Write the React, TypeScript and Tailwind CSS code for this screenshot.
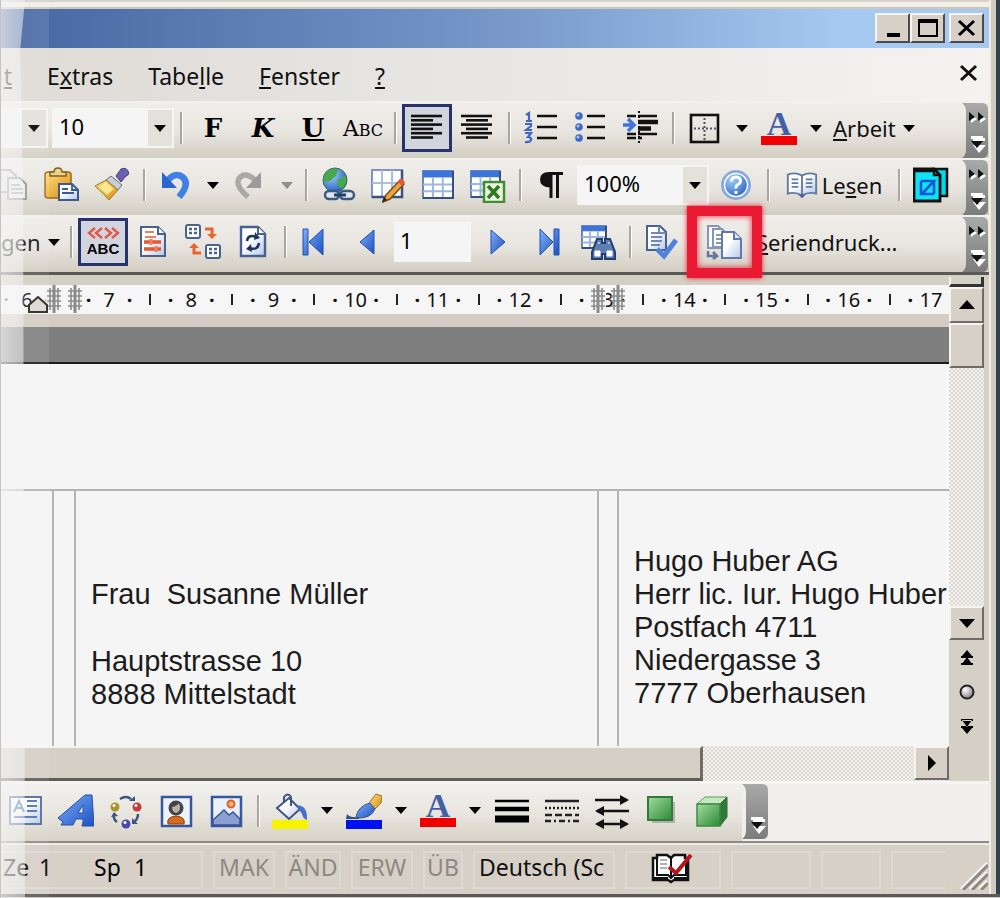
import React from "react";

type Kids = { children?: React.ReactNode };

const TOOLBAR = "flex h-[57px] border-t-2 border-[#f3f1ee] bg-linear-to-b from-[#f0eeea] via-[#e9e6e1] to-[#d2cec2] pr-px";
const RAISED =
  "bg-[#d6d0c7] border-2 border-t-[#f6f4f0] border-l-[#f6f4f0] border-r-[#6f6c68] border-b-[#6f6c68] flex items-center justify-center";
const DITHER =
  "bg-[#f3f2ef] bg-[repeating-conic-gradient(#dcd8d2_0%_25%,#f3f2ef_0%_50%)] bg-[length:4px_4px]";

function Icon({ children, size = 36 }: Kids & { size?: number }) {
  return (
    <svg width={size} height={size} viewBox="0 0 36 36" fill="none" aria-hidden="true" className="shrink-0">
      {children}
    </svg>
  );
}

function Btn({ label, active, children }: Kids & { label: string; active?: boolean }) {
  return (
    <button
      type="button"
      aria-label={label}
      aria-pressed={active}
      className={
        "flex h-[48px] w-[50px] shrink-0 items-center justify-center text-black " +
        (active ? "border-[3px] border-[#27336b] bg-[#d2d5dd]" : "")
      }
    >
      {children}
    </button>
  );
}

function Sep() {
  return (
    <div className="flex w-[14px] shrink-0 justify-center">
      <div className="h-[32px] w-[3px] border-l-2 border-r border-l-[#aaa69d] border-r-white" />
    </div>
  );
}

function Tri({ color = "#000" }: { color?: string }) {
  return (
    <svg width="12" height="7" viewBox="0 0 12 7" aria-hidden="true">
      <path d="M0 0h12L6 7z" fill={color} />
    </svg>
  );
}

function Drop({ label, color }: { label: string; color?: string }) {
  return (
    <button type="button" aria-label={label} className="flex h-[48px] w-[24px] shrink-0 items-center justify-center">
      <Tri color={color} />
    </button>
  );
}

function Combo({ label, value, className }: { label: string; value: string; className: string }) {
  return (
    <div className={"relative h-[40px] shrink-0 border-2 border-[#f6f5f3] bg-[#f5f5f5] " + className}>
      <select
        aria-label={label}
        defaultValue={value}
        className="h-[32px] w-full appearance-none bg-transparent pl-[5px] text-[22px] leading-[32px] text-black"
      >
        <option>{value}</option>
      </select>
      <span className="pointer-events-none absolute top-0 right-0 flex h-full w-[24px] items-center justify-center bg-[#e4e1db]">
        <Tri />
      </span>
    </div>
  );
}

function Overflow({ double = true }: { double?: boolean }) {
  return (
    <button type="button" aria-label="Weitere Schaltflächen" className="h-[55px] w-[26px] shrink-0">
      <svg width="26" height="55" viewBox="0 0 26 55" aria-hidden="true">
        <path d="M0 0H20Q26 0 26 6V49Q26 55 20 55H0Q4 52 4 47V8Q4 3 0 0z" fill="url(#chev)" />
        {double && (
          <g>
            <path d="M9 11l6 5-6 4zM18 11l6 5-6 4z" fill="#fff" />
            <path d="M7 9l6 5-6 4zM16 9l6 5-6 4z" fill="#111" />
          </g>
        )}
        <path d="M11 35h12v3H11zM11 42h13l-7 8z" fill="#fff" />
        <path d="M9 33h12v3H9z" fill="#fff" />
        <path d="M9 38h12l-6 7z" fill="#111" />
      </svg>
    </button>
  );
}

function Defs() {
  return (
    <svg width="0" height="0" className="absolute" aria-hidden="true">
      <defs>
        <linearGradient id="chev" x1="0" y1="0" x2="0" y2="1">
          <stop offset="0" stopColor="#a9a9a9" />
          <stop offset="1" stopColor="#7c7c7c" />
        </linearGradient>
        <linearGradient id="blue" x1="0" y1="0" x2="1" y2="1">
          <stop offset="0" stopColor="#7fb0f5" />
          <stop offset="1" stopColor="#1b4fc4" />
        </linearGradient>
        <linearGradient id="paper" x1="0" y1="0" x2="1" y2="1">
          <stop offset="0.4" stopColor="#fff" />
          <stop offset="1" stopColor="#b4c8ea" />
        </linearGradient>
        <linearGradient id="gold" x1="0" y1="0" x2="1" y2="1">
          <stop offset="0" stopColor="#ffdf80" />
          <stop offset="1" stopColor="#d98a10" />
        </linearGradient>
        <linearGradient id="green" x1="0" y1="0" x2="1" y2="1">
          <stop offset="0" stopColor="#a4dca0" />
          <stop offset="1" stopColor="#2b8a35" />
        </linearGradient>
        <radialGradient id="globe" cx="0.35" cy="0.3" r="0.8">
          <stop offset="0" stopColor="#9fd0ff" />
          <stop offset="1" stopColor="#1c55b8" />
        </radialGradient>
        <radialGradient id="ball" cx="0.35" cy="0.3" r="0.7">
          <stop offset="0" stopColor="#fff" />
          <stop offset="1" stopColor="#8a8a8a" />
        </radialGradient>
      </defs>
    </svg>
  );
}

function AlignIcon({ center }: { center?: boolean }) {
  const short = center ? 7 : 2;
  return (
    <Icon>
      {[6, 14.6, 23.2].map((y) => (
        <path key={y} d={`M2 ${y}h31`} stroke="#111" strokeWidth="2.6" />
      ))}
      {[10.3, 18.9, 27.5].map((y) => (
        <path key={y} d={`M${short} ${y}h22`} stroke="#111" strokeWidth="2.6" />
      ))}
    </Icon>
  );
}

function LetterColor({ color }: { color: string }) {
  return (
    <span className="flex flex-col items-center">
      <span className="font-['Liberation_Serif',serif] text-[34px] leading-[24px] font-bold text-[#4460a4]">A</span>
      <svg width="36" height="9" aria-hidden="true">
        <rect width="36" height="9" fill={color} />
      </svg>
    </span>
  );
}

function Grid({ x, y, w, h }: { x: number; y: number; w: number; h: number }) {
  return (
    <g>
      <rect x={x} y={y} width={w} height={h} fill="#fff" stroke="#4a6aa5" strokeWidth="1.6" />
      <rect x={x} y={y} width={w} height={h * 0.24} fill="#3b74dc" />
      <path
        d={`M${x} ${y + h * 0.5}h${w}M${x} ${y + h * 0.75}h${w}M${x + w * 0.33} ${y + h * 0.24}V${y + h}M${x + w * 0.66} ${y + h * 0.24}V${y + h}`}
        stroke="#9db6e2"
        strokeWidth="2"
      />
      <path d={`M${x} ${y + h}H${x + w}V${y}`} stroke="#34507f" strokeWidth="2" />
    </g>
  );
}

function Hatch({ className }: { className: string }) {
  return (
    <svg width="16" height="28" viewBox="0 0 16 28" aria-hidden="true" className={"absolute top-0 " + className}>
      <path d="M8 0v28" stroke="#8a8a8a" strokeWidth="3" />
      <path d="M4 3v22M12 3v22M1 6h14M1 11h14M1 16h14M1 21h14" stroke="#8a8a8a" strokeWidth="1.6" />
    </svg>
  );
}

function StatusCell({ children, className }: Kids & { className: string }) {
  return (
    <div
      className={
        "flex h-[38px] shrink-0 items-center overflow-hidden border-2 border-[#dedad3] pb-1 text-[23px] whitespace-pre " +
        className
      }
    >
      {children}
    </div>
  );
}

function TitleButton({ label, children, className = "" }: Kids & { label: string; className?: string }) {
  return (
    <button
      type="button"
      aria-label={label}
      className={
        "flex h-[30px] w-[35px] items-center justify-center border-2 border-t-[#f6f4f0] border-r-[#4d4a48] border-b-[#4d4a48] border-l-[#f6f4f0] bg-[#d6d0c7] " +
        className
      }
    >
      {children}
    </button>
  );
}

const RULER = [7, 8, 9, 10, 11, 12, 13, 14, 15, 16, 17];

export default function App() {
  return (
    <div className="relative flex min-h-screen w-full flex-col overflow-hidden border-l border-[#c4c4c4] bg-[#d6d0c7] font-['Noto_Sans',sans-serif] text-[23px] text-[#111]">
      <Defs />
      <div className="flex flex-1">
        <div className="flex min-w-0 flex-1 flex-col">
          <div className="h-[9px] border-t-2 border-b-2 border-t-[#d6d3cc] border-b-[#ccc8bb] bg-[#f2efe7]" />

          <header className="flex h-[39px] items-start justify-end bg-linear-to-r from-[#4566a2] via-[#7697c8] via-50% to-[#a6c9f2] to-85% pt-1 pr-[5px]">
            <TitleButton label="Minimieren">
              <svg width="24" height="22" aria-hidden="true">
                <path d="M6 18h13" stroke="#000" strokeWidth="4" />
              </svg>
            </TitleButton>
            <TitleButton label="Maximieren">
              <svg width="24" height="22" aria-hidden="true">
                <path d="M3 3h18v16H3z" fill="none" stroke="#000" strokeWidth="2" />
                <path d="M2 4h20" stroke="#000" strokeWidth="4" />
              </svg>
            </TitleButton>
            <TitleButton label="Schliessen" className="ml-1">
              <svg width="20" height="18" aria-hidden="true">
                <path d="M2 2l15 14M17 2L2 16" stroke="#000" strokeWidth="3" />
              </svg>
            </TitleButton>
          </header>

          <nav className="flex h-[53px] items-center bg-linear-to-r from-[#dfdcd8] via-[#e9e7e3] to-[#f4f3f2]">
            <div className="flex flex-1 gap-[35px] pt-[3px]">
              <button type="button" className="flex w-[11px] justify-end">
                <u>t</u>
              </button>
              <button type="button">
                E<u>x</u>tras
              </button>
              <button type="button">
                Tabe<u>l</u>le
              </button>
              <button type="button">
                <u>F</u>enster
              </button>
              <button type="button">
                <u>?</u>
              </button>
            </div>
            <button type="button" aria-label="Dokument schliessen" className="mr-[10px] pb-[4px]">
              <svg width="20" height="18" aria-hidden="true">
                <path d="M2 2l15 14M17 2L2 16" stroke="#111" strokeWidth="3" />
              </svg>
            </button>
          </nav>

          <div role="toolbar" aria-label="Format" className={TOOLBAR}>
            <div className="flex flex-1 items-center overflow-hidden pb-[5px] text-[22px]">
              <Combo label="Schriftart" value="" className="w-[47px]" />
              <Combo label="Schriftgrad" value="10" className="ml-[4px] w-[122px]" />
              <Sep />
              <Btn label="Fett">
                <span className="font-['DejaVu_Serif',serif] text-[26px] font-bold">F</span>
              </Btn>
              <Btn label="Kursiv">
                <span className="font-['DejaVu_Serif',serif] text-[26px] font-bold italic">K</span>
              </Btn>
              <Btn label="Unterstrichen">
                <u className="font-['DejaVu_Serif',serif] text-[26px] font-bold">U</u>
              </Btn>
              <Btn label="Kapitälchen">
                <span className="font-['DejaVu_Serif',serif] text-[22px]">
                  A<span className="text-[16px]">BC</span>
                </span>
              </Btn>
              <Sep />
              <Btn label="Linksbündig" active>
                <AlignIcon />
              </Btn>
              <Btn label="Zentriert">
                <AlignIcon center />
              </Btn>
              <Sep />
              <Btn label="Nummerierung">
                <Icon>
                  <path d="M14 6h20M14 17h20M14 28h20" stroke="#111" strokeWidth="2.4" />
                  <path
                    d="M3 5l3-2v8M3 11h6M2 14h6v2l-5 4h6M2 23h6l-3 4c5 0 4 6-3 5"
                    stroke="#3f68c4"
                    strokeWidth="2.2"
                  />
                </Icon>
              </Btn>
              <Btn label="Aufzählung">
                <Icon>
                  <path d="M14 6h18M14 17h18M14 28h18" stroke="#111" strokeWidth="2.4" />
                  <g fill="#3f68c4">
                    <circle cx="6" cy="6" r="3.8" />
                    <circle cx="6" cy="17" r="3.8" />
                    <circle cx="6" cy="28" r="3.8" />
                  </g>
                  <g fill="#a9c4f0">
                    <circle cx="5" cy="5" r="1.5" />
                    <circle cx="5" cy="16" r="1.5" />
                    <circle cx="5" cy="27" r="1.5" />
                  </g>
                </Icon>
              </Btn>
              <Btn label="Einzug vergrössern">
                <Icon>
                  <path d="M4 6h9M15 6h19M4 28h9M15 24h19M4 24h9M15 28h4" stroke="#111" strokeWidth="2.4" />
                  <path d="M15 12h20M15 18.500h13" stroke="#111" strokeWidth="4.400" />
                  <path d="M16 1v34" stroke="#111" strokeWidth="2" strokeDasharray="2 3" />
                  <path d="M0 15h10M5 9l6 6-6 6" stroke="#3f74dc" strokeWidth="3.500" />
                </Icon>
              </Btn>
              <Sep />
              <Btn label="Rahmen">
                <Icon>
                  <rect x="4" y="5" width="27" height="27" stroke="#111" strokeWidth="2.6" />
                  <path d="M17.500 8v22M7 18.500h22" stroke="#555" strokeWidth="2" strokeDasharray="2 2" />
                </Icon>
              </Btn>
              <Drop label="Rahmenarten" />
              <Btn label="Schriftfarbe">
                <LetterColor color="#f00000" />
              </Btn>
              <Drop label="Schriftfarben" />
              <button type="button" className="ml-[5px] flex items-center gap-[7px]">
                <span>
                  <u>A</u>rbeit
                </span>
                <Tri />
              </button>
            </div>
            <Overflow />
          </div>

          <div role="toolbar" aria-label="Standard" className={TOOLBAR}>
            <div className="flex flex-1 items-center overflow-hidden pb-[5px] text-[22px]">
              <div className="flex w-[36px] shrink-0 justify-end overflow-hidden">
                <Btn label="Kopieren">
                  <Icon>
                    <path d="M4 3h12l6 6v16H4z" fill="#e8e8e8" stroke="#999" strokeWidth="2" />
                    <path d="M14 11h12l6 6v15H14z" fill="#eee" stroke="#999" strokeWidth="2" />
                    <path d="M17 18h9M17 22h12M17 26h12" stroke="#aaa" strokeWidth="2" />
                  </Icon>
                </Btn>
              </div>
              <Btn label="Einfügen">
                <Icon>
                  <rect x="1" y="5" width="26" height="26" rx="3" fill="url(#gold)" stroke="#9a6714" strokeWidth="1.500" />
                  <path d="M6 9V5h4q0-4 4-4t4 4h4v4z" fill="#e9d28a" stroke="#806020" strokeWidth="1.500" />
                  <path d="M15 17h13l6 6v10H15z" fill="url(#paper)" stroke="#3c5a90" strokeWidth="2" />
                  <path d="M28 17v6h6M18 22h6M18 26h12M15 33h20" stroke="#3c5a90" strokeWidth="1.800" />
                </Icon>
              </Btn>
              <Btn label="Format übertragen">
                <Icon>
                  <path d="M22 9l5-7q5-2 7 2t-2 5l-5 6z" fill="#6a60b0" stroke="#453c85" />
                  <path d="M17 9l11 9-4 5-12-10z" fill="#c7ced9" stroke="#666f80" />
                  <path d="M12 13l12 10-9 10Q10 27 1 19z" fill="url(#gold)" stroke="#9a8020" />
                  <path d="M12 15l8 7-7 6-8-8z" fill="#fdf3a0" opacity=".8" />
                </Icon>
              </Btn>
              <Sep />
              <Btn label="Rückgängig">
                <Icon>
                  <path d="M9 14q9-10 16-3.500t-4 19.500" stroke="#3f80e6" strokeWidth="6.500" />
                  <path d="M4 5v16h15z" fill="#2b66d4" />
                </Icon>
              </Btn>
              <Drop label="Rückgängig-Liste" />
              <Btn label="Wiederherstellen">
                <Icon>
                  <path d="M23 13q-10-9-15.500-2t8.500 19" stroke="#aaa9a6" strokeWidth="5.500" />
                  <path d="M29 5v16H14z" fill="#9c9b99" />
                </Icon>
              </Btn>
              <Drop label="Wiederherstellen-Liste" color="#8f8e8b" />
              <Sep />
              <Btn label="Hyperlink">
                <Icon>
                  <circle cx="15" cy="13" r="12" fill="url(#globe)" stroke="#2f6a50" />
                  <path d="M6 6q5-6 12-4l-2 7-6 5-5 1-2-4zM18 12l8-3q2 7-4 13l-5-4z" fill="#48a850" />
                  <rect x="5" y="24" width="14" height="8" rx="4" fill="#dfe6f2" stroke="#3c5a80" strokeWidth="2.500" />
                  <rect x="20" y="24" width="14" height="8" rx="4" fill="#dfe6f2" stroke="#3c5a80" strokeWidth="2.500" />
                  <path d="M14 28h12" stroke="#23406a" strokeWidth="3" />
                </Icon>
              </Btn>
              <Btn label="Tabellen und Rahmen">
                <Icon>
                  <rect x="2" y="3" width="30" height="27" fill="#fff" stroke="#7b94c2" strokeWidth="2" />
                  <path d="M12 3v27M22 3v27M2 16h30" stroke="#a9bde0" strokeWidth="2" />
                  <path d="M2 30h30V3" stroke="#38527f" strokeWidth="2.500" />
                  <path d="M16 28L30 13l4 4-14 15-7 3z" fill="#eda43a" stroke="#774c20" strokeWidth="1.500" />
                  <path d="M28 15l3-4 4 4-3 4z" fill="#e4563a" />
                  <path d="M12 35l2-5 3 3z" fill="#222" />
                </Icon>
              </Btn>
              <Btn label="Tabelle einfügen">
                <Icon>
                  <Grid x={3} y={4} w={30} h={27} />
                </Icon>
              </Btn>
              <Btn label="Excel-Tabelle einfügen">
                <Icon>
                  <Grid x={1} y={4} w={29} h={26} />
                  <rect x="14" y="15" width="20" height="20" fill="#eef6e8" stroke="#3f8f2c" strokeWidth="2.500" />
                  <path d="M18 19l11 12M29 19L18 31" stroke="#2f7a20" strokeWidth="3.500" />
                </Icon>
              </Btn>
              <Sep />
              <Btn label="Formatierungszeichen">
                <Icon>
                  <path d="M29 5H15Q6 5 6 12.500t9.500 8V31h3V8h3.500v23h3V8h4z" fill="#111" />
                </Icon>
              </Btn>
              <Combo label="Zoom" value="100%" className="mr-[2px] w-[132px]" />
              <Btn label="Hilfe">
                <Icon>
                  <circle cx="18" cy="18" r="13.500" fill="url(#globe)" stroke="#86a9e2" strokeWidth="3" />
                  <circle cx="18" cy="18" r="11.500" stroke="#fff" strokeWidth="1.500" />
                  <path d="M13.500 14.500q0-4.500 4.500-4.500t4.500 4q0 2-2.500 3.500t-2 4M18 24v3" stroke="#fff" strokeWidth="3" />
                </Icon>
              </Btn>
              <Sep />
              <button type="button" className="flex w-[117px] shrink-0 items-center justify-center gap-[3px]">
                <Icon size={34}>
                  <path d="M3 7q8-3 15 1 7-4 15-1v20q-8-2-15 2-7-4-15-2z" fill="url(#paper)" stroke="#6479a5" strokeWidth="2" />
                  <path d="M18 8v21M7 12h7M7 16h7M7 20h7M22 12h7M22 16h7M22 20h7" stroke="#6479a5" strokeWidth="2" />
                  <path d="M14 28h8l-4 4z" fill="#4a5f90" />
                </Icon>
                <span>
                  Le<u>s</u>en
                </span>
              </button>
              <Sep />
              <Btn label="Adressen">
                <Icon>
                  <path d="M20 2h14v27H22z" fill="#00d8ee" stroke="#111" strokeWidth="2.500" />
                  <path d="M1 2h20l6 6v26H1z" fill="#10e4f4" stroke="#111" strokeWidth="2.800" />
                  <path d="M1 4h20M21 2v6h6" stroke="#111" strokeWidth="2.500" />
                  <path d="M8 14h13L9 27h12M8 14v13M21 14v13" stroke="#1557d8" strokeWidth="2.600" />
                </Icon>
              </Btn>
            </div>
            <Overflow />
          </div>

          <div role="toolbar" aria-label="Seriendruck" className={TOOLBAR}>
            <div className="flex flex-1 items-center pb-[5px] text-[22px]">
              <button type="button" className="flex w-[63px] shrink-0 items-center gap-[7px]">
                gen
                <Tri />
              </button>
              <Sep />
              <Btn label="Seriendruck-Vorschau" active>
                <span className="flex flex-col items-center">
                  <svg width="34" height="14" viewBox="0 0 34 14" fill="none" aria-hidden="true">
                    <path d="M9 2L3 7l6 5M16 2l-6 5 6 5M19 2l6 5-6 5M26 2l6 5-6 5" stroke="#e0584e" strokeWidth="2.400" />
                  </svg>
                  <span className="font-['Liberation_Sans',sans-serif] text-[15px] leading-[18px] font-bold">ABC</span>
                </span>
              </Btn>
              <Btn label="Seriendruckfelder hervorheben">
                <Icon>
                  <path d="M6 3h17l7 7v22H6z" fill="url(#paper)" stroke="#48618f" strokeWidth="2" />
                  <path d="M23 3v7h7" fill="#fff" stroke="#48618f" strokeWidth="2" />
                  <path d="M10 8h9M10 13h11" stroke="#f08060" strokeWidth="2" />
                  <path d="M9 18h17M9 25h17" stroke="#e8562e" strokeWidth="3.500" />
                  <path d="M16 15v6M21 22v6" stroke="#f08060" strokeWidth="3" />
                </Icon>
              </Btn>
              <Btn label="Felder übereinstimmen">
                <Icon>
                  <rect x="1" y="1" width="14" height="13" rx="2" fill="#fff" stroke="#48618f" strokeWidth="2" />
                  <rect x="21" y="21" width="14" height="13" rx="2" fill="#fff" stroke="#48618f" strokeWidth="2" />
                  <path
                    d="M4 5h3M9 5h3M4 9h3M9 9h3M24 25h3M29 25h3M24 29h3M29 29h3"
                    stroke="#48618f"
                    strokeWidth="2.500"
                  />
                  <path d="M20 5h7v7M16 29H9v-6" stroke="#e8662e" strokeWidth="3" />
                  <path d="M22 10h10l-5 5zM4 24l5-5 5 5z" fill="#e8662e" />
                </Icon>
              </Btn>
              <Btn label="Etiketten übertragen">
                <Icon>
                  <path d="M6 3h17l7 7v22H6z" fill="url(#paper)" stroke="#48618f" strokeWidth="2.400" />
                  <path d="M23 3v7h7" fill="#fff" stroke="#48618f" strokeWidth="2" />
                  <path d="M12 17q1-7 9-4M24 19q-1 8-10 5" stroke="#1f3460" strokeWidth="2.500" />
                  <path d="M20 8l5 6-6 2zM16 20l-5 5 6 3z" fill="#1f3460" />
                </Icon>
              </Btn>
              <Sep />
              <Btn label="Erster Datensatz">
                <Icon>
                  <path d="M4 5h5v26H4zM24 5v26L10 18z" fill="url(#blue)" stroke="#1e50b4" />
                </Icon>
              </Btn>
              <Btn label="Vorheriger Datensatz">
                <Icon>
                  <path d="M25 6v24L11 18z" fill="url(#blue)" stroke="#1e50b4" />
                </Icon>
              </Btn>
              <input
                aria-label="Datensatz"
                defaultValue="1"
                className="mx-[2px] h-[40px] w-[77px] shrink-0 bg-[#f5f5f5] pb-1 pl-[6px] text-[22px] text-black"
              />
              <Btn label="Nächster Datensatz">
                <Icon>
                  <path d="M11 6v24l14-12z" fill="url(#blue)" stroke="#1e50b4" />
                </Icon>
              </Btn>
              <Btn label="Letzter Datensatz">
                <Icon>
                  <path d="M10 5v26l13-13zM24 5h5v26h-5z" fill="url(#blue)" stroke="#1e50b4" />
                </Icon>
              </Btn>
              <Btn label="Eintrag suchen">
                <Icon>
                  <Grid x={2} y={2} w={24} h={22} />
                  <path
                    d="M17 15h5v4h3v-4h5l5 13v7H25v-5h-3v5H12v-7z"
                    fill="#5f7fb4"
                    stroke="#22406f"
                    strokeWidth="2"
                  />
                  <path d="M15 27h5v5h-5zM27 27h5v5h-5zM18 19h2M28 19h2" fill="#fff" stroke="#fff" />
                </Icon>
              </Btn>
              <Sep />
              <Btn label="Auf Fehler prüfen">
                <Icon>
                  <path d="M3 2h13l6 6v18H3z" fill="url(#paper)" stroke="#48618f" strokeWidth="2" />
                  <path d="M7 9h8M7 13h11M7 17h11M7 21h9M15 2v7h7" stroke="#7188b4" strokeWidth="2" />
                  <path d="M13 25l7 7 12-16" stroke="#4f82da" strokeWidth="5" />
                </Icon>
              </Btn>
              <div className="relative flex w-[69px] shrink-0 justify-center pl-1">
                <Btn label="Seriendruck in neues Dokument">
                  <Icon>
                    <path d="M2 2h10l4 4v18H2z" fill="#fff" stroke="#8595b8" strokeWidth="2" />
                    <path d="M7 5h9l4 4v14H7zM10 11h8M10 15h8M10 19h8" fill="#fff" stroke="#8595b8" strokeWidth="2" />
                    <path d="M16 8h12l7 7v19H16z" fill="url(#paper)" stroke="#6179ad" strokeWidth="2" />
                    <path d="M28 8v7h7" fill="#dfe8fa" stroke="#6179ad" strokeWidth="2" />
                    <path d="M2 27v5h8M7 28l4 4-4 3" stroke="#63779c" strokeWidth="2.500" />
                  </Icon>
                </Btn>
                <div className="pointer-events-none absolute -top-[12px] left-0 z-10 h-[72px] w-[75px] border-[10px] border-[#ea1a32] shadow-[0_0_5px_#ea1a32,inset_0_0_6px_#ea1a32]" />
              </div>
              <button type="button" className="whitespace-nowrap">
                <u>S</u>eriendruck...
              </button>
            </div>
            <Overflow />
          </div>

          <div className="flex flex-1 border-t-[3px] border-[#5a5854] pr-[5px]">
            <div className="flex min-w-0 flex-1 flex-col">
              <div className="border-t-[10px] border-b-[13px] border-t-[#d3cfc3] border-b-[#d4ccc4]">
                <div className="relative h-[29px] overflow-hidden bg-[#f6f6f6] text-[20px] leading-[29px]">
                  <div className="mr-[8px] -ml-[5px] flex">
                    {["·", "6"].map((t) => (
                      <span key={t} className="flex w-0 flex-1 justify-center">
                        {t}
                      </span>
                    ))}
                    {RULER.map((n) => (
                      <React.Fragment key={n}>
                        <span className="w-0 flex-1 text-center font-bold">·</span>
                        <span className="flex w-0 flex-1 items-center justify-center">
                          <i className="h-[11px] w-[2px] bg-[#222]" />
                        </span>
                        <span className="w-0 flex-1 text-center font-bold">·</span>
                        <span className="flex w-0 flex-1 justify-center">{n}</span>
                      </React.Fragment>
                    ))}
                  </div>
                  <Hatch className="left-[45px] bg-[#f6f6f6]" />
                  <Hatch className="left-[66px] bg-[#f6f6f6]" />
                  <Hatch className="left-[589px] bg-[#f6f6f6]" />
                  <Hatch className="left-[609px]" />
                  <svg width="20" height="18" viewBox="0 0 20 18" className="absolute bottom-0 left-[27px]" aria-hidden="true">
                    <path d="M1 16V9l9-8 9 8v7z" fill="#ddd9d2" stroke="#222" strokeWidth="2" />
                  </svg>
                </div>
              </div>
              <div className="h-[37px] border-b-2 border-[#1c1c1c] bg-[#7f7f7f]" />

              <main className="flex-1 bg-[#f5f5f5] pt-[125px] font-['Liberation_Sans',sans-serif] text-[29px] leading-[33px] text-[#1c1c1c]">
                <div className="flex h-full min-h-[257px] border-t-2 border-[#b4b4b4] whitespace-pre">
                  <div className="w-[53px] shrink-0 border-r-2 border-[#b4b4b4]" />
                  <div className="w-[22px] shrink-0 border-r-2 border-[#b4b4b4]" />
                  <address className="w-[523px] shrink-0 border-r-2 border-[#b4b4b4] pt-[87px] pl-[15px] not-italic">
                    <p>Frau  Susanne Müller</p>
                    <p className="pt-[34px]">Hauptstrasse 10</p>
                    <p>8888 Mittelstadt</p>
                  </address>
                  <div className="w-[20px] shrink-0 border-r-2 border-[#b4b4b4]" />
                  <address className="min-w-0 flex-1 overflow-hidden pt-[54px] pl-[15px] not-italic">
                    <p>Hugo Huber AG</p>
                    <p>Herr lic. Iur. Hugo Huber</p>
                    <p>Postfach 4711</p>
                    <p>Niedergasse 3</p>
                    <p>7777 Oberhausen</p>
                  </address>
                </div>
              </main>

              <div className={"flex h-[35px] justify-between " + DITHER}>
                <div className="w-[74%] border-t-2 border-r-[3px] border-b-[3px] border-t-[#f6f4f0] border-r-[#6f6c68] border-b-[#5f5c58] bg-[#d5d0c6]" />
                <button type="button" aria-label="Nach rechts" className={RAISED + " h-[34px] w-[35px]"}>
                  <svg width="10" height="16" aria-hidden="true">
                    <path d="M1 0v16l8-8z" />
                  </svg>
                </button>
              </div>
            </div>

            <div className="flex w-[35px] shrink-0 flex-col bg-[#d5d0c6]">
              <div className="mt-[2px] h-[10px] border-r-[3px] border-b-[3px] border-l-2 border-r-[#333] border-b-[#333] border-l-[#f6f4f0]" />
              <button type="button" aria-label="Nach oben" className={RAISED + " h-[36px]"}>
                <svg width="16" height="10" aria-hidden="true">
                  <path d="M0 9h16L8 0z" />
                </svg>
              </button>
              <div className={RAISED + " h-[45px]"} />
              <div className={"flex-1 " + DITHER} />
              <button type="button" aria-label="Nach unten" className={RAISED + " h-[34px]"}>
                <svg width="16" height="9" aria-hidden="true">
                  <path d="M0 0h16L8 9z" />
                </svg>
              </button>
              <div className="flex h-[141px] flex-col items-center gap-[18px] pt-[10px]">
                <button type="button" aria-label="Vorherige Seite">
                  <svg width="14" height="15" className="block" aria-hidden="true">
                    <path d="M7 0l5 6H2zM7 7l5 7H2zM1 6h12v2H1zM1 13h12v2H1z" />
                  </svg>
                </button>
                <button type="button" aria-label="Browseobjekt">
                  <svg width="16" height="18" className="block" aria-hidden="true">
                    <circle cx="8" cy="9" r="6.500" fill="url(#ball)" stroke="#222" strokeWidth="2" />
                  </svg>
                </button>
                <button type="button" aria-label="Nächste Seite">
                  <svg width="14" height="15" className="block" aria-hidden="true">
                    <path d="M7 15l5-6H2zM7 8l5-7H2zM1 0h12v2H1zM1 7h12v2H1z" />
                  </svg>
                </button>
              </div>
            </div>
          </div>

          <div role="toolbar" aria-label="Zeichnen" className="flex h-[62px] border-t-[3px] border-b-2 border-t-[#f5f4f1] border-b-[#8e8b85] bg-[#f1efed]">
            <div className="flex items-center bg-linear-to-b from-[#f2f0ed] via-[#e9e6e0] to-[#d6d2c6] pr-[5px] pb-1">
              <Btn label="Textfeld">
                <Icon>
                  <rect x="2" y="4" width="31" height="27" fill="url(#paper)" stroke="#50689c" strokeWidth="2" />
                  <path d="M6 19l5-11 5 11M8 15h6M19 8h10M19 13h10M19 18h10M6 24h23" stroke="#5070b0" strokeWidth="2" />
                </Icon>
              </Btn>
              <Btn label="WordArt">
                <Icon>
                  <path d="M0 25L27 2h7l2 31h-12l1-4v-3h-7l-3 6H3l2-3zM20 20h5V12z" fill="url(#blue)" stroke="#2450a8" fillRule="evenodd" />
                </Icon>
              </Btn>
              <Btn label="Schematische Darstellung">
                <Icon>
                  <circle cx="7" cy="14" r="4.500" fill="#a8952c" />
                  <circle cx="29" cy="14" r="4.500" fill="#c23a3a" />
                  <circle cx="18" cy="31" r="4.500" fill="#4848b0" />
                  <path d="M12 6q6-4 11 0M9 29q-4-3-3-7M30 21q0 5-4 8" stroke="#3e5580" strokeWidth="2.500" />
                  <path d="M21 8h6V3zM3 24l3-5 4 4zM24 25v6h6z" fill="#3e5580" />
                  <circle cx="6" cy="12.500" r="1.500" fill="#fff" />
                  <circle cx="28" cy="12.500" r="1.500" fill="#fff" />
                  <circle cx="17" cy="29.500" r="1.500" fill="#fff" />
                </Icon>
              </Btn>
              <Btn label="ClipArt">
                <Icon>
                  <rect x="4" y="4" width="29" height="29" fill="#eef2fa" stroke="#36579c" strokeWidth="2.500" />
                  <path d="M10 31q-2-7 8-8 10 1 8 8z" fill="#d96b1c" stroke="#8a3d10" />
                  <circle cx="18" cy="15" r="7.500" fill="#444" />
                  <path d="M14 14q5-1 7-4 3 8-3 10-4-1-4-6z" fill="#b5b0a8" />
                </Icon>
              </Btn>
              <Btn label="Grafik">
                <Icon>
                  <rect x="4" y="4" width="29" height="29" fill="#eaf1fc" stroke="#36579c" strokeWidth="2.500" />
                  <path d="M5 27l11-10 5 5 4-3 7 7v6H5z" fill="#8b9fd0" stroke="#36579c" strokeWidth="1.500" />
                  <circle cx="23" cy="11" r="3.500" fill="#f7b070" stroke="#e0602c" strokeWidth="2" />
                </Icon>
              </Btn>
              <Sep />
              <Btn label="Füllfarbe">
                <Icon>
                  <path d="M5 15L17 5l11 11-11 10z" fill="url(#paper)" stroke="#3e5580" strokeWidth="2" />
                  <path d="M12 10V4q4-5 7 0v9" stroke="#3e5580" strokeWidth="2" />
                  <path d="M24 12q12 0 11 15-4-1-5-6z" fill="#4472c4" />
                  <path d="M0 27h36v9H0z" fill="#f8f400" />
                </Icon>
              </Btn>
              <Drop label="Füllfarben" />
              <Btn label="Linienfarbe">
                <Icon>
                  <path d="M23 10l7-9 6 2-1 7-7 7z" fill="url(#gold)" stroke="#9a7820" />
                  <path d="M10 24q2-11 14-14l5 6q-4 10-19 9z" fill="url(#blue)" stroke="#3e5580" />
                  <path d="M1 21q3 4 12 3v2H0z" fill="#2b4f94" />
                  <path d="M0 27h36v9H0z" fill="#0010f0" />
                </Icon>
              </Btn>
              <Drop label="Linienfarben" />
              <Btn label="Schriftfarbe">
                <LetterColor color="#f00000" />
              </Btn>
              <Drop label="Schriftfarben" />
              <Btn label="Linienart">
                <Icon>
                  <path d="M1 8h34" stroke="#000" strokeWidth="2.500" />
                  <path d="M1 16h34" stroke="#000" strokeWidth="4.500" />
                  <path d="M1 26h34" stroke="#000" strokeWidth="7" />
                </Icon>
              </Btn>
              <Btn label="Strichart">
                <Icon>
                  <path d="M1 8h34" stroke="#222" strokeWidth="2.500" />
                  <path d="M1 15h34" stroke="#222" strokeWidth="2.500" strokeDasharray="2 2" />
                  <path d="M1 22h34" stroke="#222" strokeWidth="2.500" strokeDasharray="7 3" />
                  <path d="M1 28h34" stroke="#222" strokeWidth="2.500" strokeDasharray="6 3 2 3" />
                </Icon>
              </Btn>
              <Btn label="Pfeilart">
                <Icon>
                  <path d="M1 7h32M3 18h32M3 31h30" stroke="#111" strokeWidth="2.400" />
                  <path d="M26 2l9 5-9 5zM10 13l-9 5 9 5zM10 26l-9 5 9 5zM26 26l9 5-9 5z" fill="#111" />
                </Icon>
              </Btn>
              <Btn label="Schattenart">
                <Icon>
                  <path d="M8 9h23v21H8z" fill="#8f8f8c" opacity=".6" />
                  <rect x="4" y="4" width="24" height="23" fill="url(#green)" stroke="#35783a" strokeWidth="2" />
                </Icon>
              </Btn>
              <Btn label="3D-Art">
                <Icon>
                  <path d="M3 11l8-7h22l-7 7z" fill="#c8e8c4" stroke="#5a9a5c" />
                  <path d="M26 11l7-7v20l-7 9z" fill="#2f7a38" stroke="#2c6a34" />
                  <rect x="3" y="11" width="23" height="22" fill="url(#green)" stroke="#3c8a42" strokeWidth="1.500" />
                </Icon>
              </Btn>
            </div>
            <Overflow double={false} />
          </div>

          <footer className="flex h-[51px] items-center gap-[10px] overflow-hidden border-t-2 border-t-[#eceae5] bg-[#d6d0c7]">
            <StatusCell className="w-[202px] text-black">
              <span className="w-[36px]">Ze</span>
              <span className="w-[55px]">1</span>
              <span className="w-[40px]">Sp</span>
              <span>1</span>
            </StatusCell>
            <StatusCell className="w-[62px] justify-center text-[#8c8882]">MAK</StatusCell>
            <StatusCell className="w-[56px] justify-center text-[#8c8882]">ÄND</StatusCell>
            <StatusCell className="w-[62px] justify-center text-[#8c8882]">ERW</StatusCell>
            <StatusCell className="w-[40px] justify-center text-[#8c8882]">ÜB</StatusCell>
            <StatusCell className="w-[142px] pl-[4px]">Deutsch (Sc</StatusCell>
            <StatusCell className="w-[96px] pl-[22px]">
              <svg width="44" height="32" viewBox="0 0 44 32" fill="none" aria-hidden="true">
                <path d="M4 6h4V3h10l4 3 3-3h11v3h3v22H25l-3 2-3-2H4z" fill="#fff" stroke="#111" strokeWidth="2.500" />
                <path d="M8 5v18h11l3 3 3-3h12V5M22 6v20M4 26h15M25 26h14" stroke="#111" strokeWidth="2" />
                <path d="M11 8h7M11 12h7M11 16h7" stroke="#999" strokeWidth="1.500" />
                <path d="M20 15l7 6L42 3" stroke="#b8141c" strokeWidth="4" />
              </svg>
            </StatusCell>
            <StatusCell className="w-[80px]" />
            <StatusCell className="w-[60px]" />
            <StatusCell className="w-[54px] border-r-0" />
            <svg width="28" height="28" viewBox="0 0 28 28" className="mr-px mb-1 ml-auto shrink-0 self-end" aria-hidden="true">
              <path d="M1 27L27 1M10 27L27 10M19 27l8-8" stroke="#f5f3ef" strokeWidth="3" />
              <path d="M3 28L28 3M12 28l16-16M21 28l7-7" stroke="#8b8781" strokeWidth="3" />
            </svg>
          </footer>
        </div>
        <div className="w-[11px] shrink-0 border-r-4 border-l-2 border-r-[#34424f] border-l-[#f0ede6] bg-[#d0ccc0]" />
      </div>
      <div className="h-[5px] shrink-0 border-t-[3px] border-[#5c5a57] bg-[#c9c9c9]" />

      <div className="pointer-events-none absolute inset-y-0 left-0 w-[48px] bg-[#f5f5f5]/10" />
      <div className="pointer-events-none absolute inset-y-0 left-0 w-[24px] bg-linear-to-r from-[#f5f5f5]/70 to-[#f5f5f5]/50 [clip-path:polygon(0_0,100%_0,80%_50px,92%_200px,100%_100%,0_100%)]" />
    </div>
  );
}
